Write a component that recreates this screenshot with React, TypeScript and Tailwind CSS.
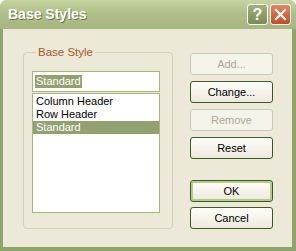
import React from 'react';

const font = { fontFamily: '"Liberation Sans", Arial, sans-serif' };

const Btn: React.FC<{ label: string; disabled?: boolean; isDefault?: boolean }> = ({ label, disabled, isDefault }) => (
  <div
    className={
      'w-[83px] h-[22px] rounded-[3px] border flex items-center justify-center text-[11px] ' +
      (disabled
        ? 'border-[#cac8bb] bg-[#f5f4ea] text-[#aca899]'
        : 'border-[#3c5a1e] bg-gradient-to-b from-[#fefefa] to-[#ece9dc] text-black') +
      (isDefault ? ' shadow-[inset_0_0_0_2px_#b5cc86]' : '')
    }
  >
    {label}
  </div>
);

const App: React.FC = () => {
  return (
    <div className="w-[296px] h-[251px] flex flex-col rounded-t-[7px] overflow-hidden bg-[#8da46a]" style={font}>
      {/* title bar */}
      <div className="h-[29px] flex items-center pl-[8px] pr-[5px] bg-gradient-to-b from-[#c6d4a2] via-[#aebe86] to-[#a6b67e]">
        <span className="text-white font-bold text-[14px] [text-shadow:1px_1px_0_#6b7a4a] flex-1">Base Styles</span>
        <div className="w-[21px] h-[21px] rounded-[3px] border border-white bg-gradient-to-b from-[#a2b07c] to-[#7c8c55] flex items-center justify-center text-white font-bold text-[16px] mr-[2px]">?</div>
        <div className="w-[21px] h-[21px] rounded-[3px] border border-white bg-gradient-to-b from-[#e8825e] to-[#c84a26] flex items-center justify-center">
          <svg width="13" height="13" viewBox="0 0 13 13">
            <path d="M2 2 L11 11 M11 2 L2 11" stroke="white" strokeWidth="2.2" strokeLinecap="square" />
          </svg>
        </div>
      </div>
      {/* client */}
      <div className="flex-1 ml-[3px] mb-[4px] mr-[4px] bg-[#ece9d8] flex pl-[20px] pt-[23px]">
        <div className="relative w-[150px] h-[177px] border border-[#d0d0bf] rounded-[4px]">
          <span className="absolute left-[12px] top-[-8px] px-[2px] bg-[#ece9d8] text-[11.5px] leading-[14px] text-[#a9581c]">Base Style</span>
          <div className="pt-[18px] pl-[8px]">
            <div className="w-[128px] h-[21px] border border-[#a5b97b] bg-white flex items-center px-[2px]">
              <span className="bg-[#93a070] text-white text-[11px] leading-[13px] px-[1px]">Standard</span>
            </div>
            <div className="w-[128px] h-[120px] border border-[#a5b97b] bg-white mt-[1px] pt-[1px] text-[11px] leading-[13px]">
              <div className="px-[3px] h-[13px]">Column Header</div>
              <div className="px-[3px] h-[13px]">Row Header</div>
              <div className="px-[3px] h-[13px] bg-[#93a070] text-white">Standard</div>
            </div>
          </div>
        </div>
        <div className="ml-[17px] pt-[1px] flex flex-col">
          <div className="flex flex-col gap-[6px]">
            <Btn label="Add..." disabled />
            <Btn label="Change..." />
            <Btn label="Remove" disabled />
            <Btn label="Reset" />
          </div>
          <div className="flex flex-col gap-[5px] mt-[21px]">
            <Btn label="OK" isDefault />
            <Btn label="Cancel" />
          </div>
        </div>
      </div>
    </div>
  );
};

export default App;
